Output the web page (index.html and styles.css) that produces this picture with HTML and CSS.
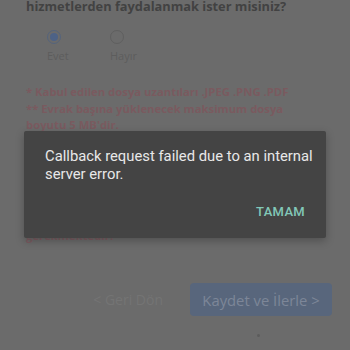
FILE: index.html
```html
<!DOCTYPE html>
<html lang="tr">
<head>
<meta charset="utf-8">
<link rel="stylesheet" href="styles.css">
</head>
<body>
<div class="page">
  <h2 class="question">hizmetlerden faydalanmak ister misiniz?</h2>
  <div class="radios">
    <div class="radio-item">
      <span class="radio checked"></span>
      <span class="radio-label">Evet</span>
    </div>
    <div class="radio-item">
      <span class="radio"></span>
      <span class="radio-label">Hayır</span>
    </div>
  </div>
  <div class="notes">
    <p>* Kabul edilen dosya uzantıları .JPEG .PNG .PDF</p>
    <p>** Evrak başına yüklenecek maksimum dosya boyutu 5 MB'dir.</p>
  </div>
  <div class="hidden-area"></div>
  <p class="note-tail">gerekmektedir.</p>
  <div class="actions">
    <button class="back">&lt; Geri Dön</button>
    <button class="next">Kaydet ve İlerle &gt;</button>
  </div>
  <div class="dot-row"><span class="dot"></span></div>
</div>
<div class="dialog">
  <p class="dialog-text">Callback request failed due to an internal server error.</p>
  <div class="dialog-actions"><span class="dialog-btn">TAMAM</span></div>
</div>
</body>
</html>
```
FILE: styles.css
```css
html, body {
  margin: 0;
  padding: 0;
  background: #6b6b6b;
  width: 350px;
  height: 350px;
  overflow: hidden;
}
.page {
  padding: 0 26px;
  font-family: "Open Sans", sans-serif;
}
.question {
  margin: -4px 0 0 0;
  font-size: 12.8px;
  line-height: 20px;
  font-weight: bold;
  color: #424242;
  white-space: nowrap;
}
.radios {
  display: flex;
  padding-left: 21px;
  margin-top: 14px;
}
.radio-item {
  display: flex;
  flex-direction: column;
  align-items: flex-start;
  width: 63px;
}
.radio {
  width: 12px;
  height: 12px;
  border: 1.5px solid #5f5f5f;
  border-radius: 50%;
  box-sizing: content-box;
  position: relative;
}
.radio.checked {
  border-color: #55647c;
  background: #6b6b6b;
}
.radio.checked::after {
  content: "";
  position: absolute;
  left: 2px;
  top: 2px;
  width: 8px;
  height: 8px;
  border-radius: 50%;
  background: #4d6286;
}
.radio-label {
  margin-top: 5px;
  font-size: 11px;
  color: #5d5d5d;
  line-height: 14px;
}
.notes {
  margin-top: 21px;
}
.notes p, .note-tail {
  margin: 0;
  font-size: 11.3px;
  line-height: 16.5px;
  font-weight: bold;
  color: #7a5a5f;
  padding-right: 16px;
}
.hidden-area {
  height: 94px;
}
.actions {
  display: flex;
  justify-content: flex-end;
  align-items: center;
  gap: 27px;
  margin-top: 39px;
  margin-right: -8px;
}
.back {
  background: none;
  border: none;
  font-family: "Open Sans", sans-serif;
  font-size: 14px;
  color: #747474;
  padding: 0;
}
.next {
  background: #58667c;
  border: none;
  border-radius: 4px;
  width: 142px;
  height: 33px;
  font-family: "Open Sans", sans-serif;
  font-size: 14.8px;
  color: #7d8698;
  padding: 0;
}
.dot-row {
  display: flex;
  justify-content: flex-end;
  padding-right: 64px;
  margin-top: 18px;
}
.dot {
  width: 3px;
  height: 3px;
  border-radius: 50%;
  background: #5c5c5c;
}
.dialog {
  position: absolute;
  left: 24px;
  top: 131px;
  width: 302px;
  height: 107px;
  box-sizing: border-box;
  background: #444444;
  border-radius: 2px;
  box-shadow: 0 3px 8px rgba(0,0,0,0.25);
  padding: 17px 12px 0 21px;
  font-family: Roboto, sans-serif;
}
.dialog-text {
  margin: 0;
  font-size: 14.8px;
  line-height: 17.5px;
  color: #e8e8e8;
}
.dialog-actions {
  display: flex;
  justify-content: flex-end;
  margin-top: 21px;
  padding-right: 9px;
}
.dialog-btn {
  font-size: 13px;
  font-weight: 500;
  letter-spacing: 0.3px;
  color: #82c8b8;
}
```
